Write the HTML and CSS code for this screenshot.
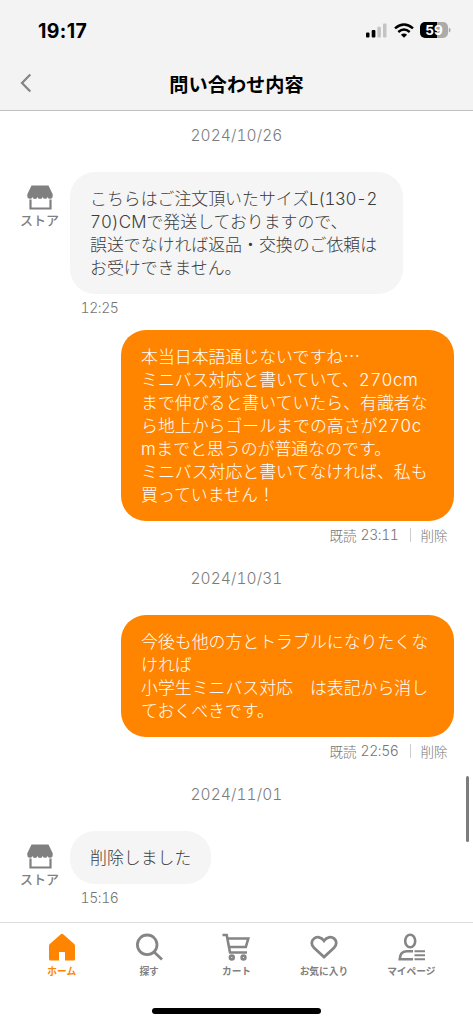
FILE: index.html
```html
<!DOCTYPE html>
<html lang="ja">
<head>
<meta charset="utf-8">
<meta name="viewport" content="width=device-width, initial-scale=1">
<title>問い合わせ内容</title>
<link rel="stylesheet" href="styles.css">
</head>
<body>
<svg width="0" height="0" class="defs" aria-hidden="true">
  <symbol id="store" viewBox="0 0 26 25">
    <path fill="#808080" d="M4.5 0.5h17l4.200 8.800v1.700a2.600 2.600 0 0 1-5.100 .9 2.600 2.600 0 0 1-5 0 2.600 2.600 0 0 1-5.100 0 2.600 2.600 0 0 1-5.100 0A2.600 2.600 0 0 1 .3 11V9.300z"/>
    <path fill="none" stroke="#808080" stroke-width="2.200" d="M3.500 14.500v9h20v-9"/>
  </symbol>
</svg>
<div class="screen">
  <header class="top">
    <div class="status">
      <span class="clock">19:17</span>
      <div class="indicators">
        <svg width="21" height="15" viewBox="0 0 21 15"><rect x="0" y="9.5" width="3.5" height="5" rx="1"/><rect x="5.7" y="7" width="3.7" height="7.5" rx="1"/><rect x="11.4" y="3.7" width="3.5" height="10.8" rx="1" fill="#c3c3c3"/><rect x="17" y="0.5" width="3.5" height="14" rx="1" fill="#c3c3c3"/></svg>
        <svg class="wifi" width="20" height="15" viewBox="0 0 20 15" fill="none" stroke="#000" stroke-width="2.5"><path d="M1 5.4Q10-2.3 19 5.4M4.3 9Q10 4.1 15.7 9"/><path fill="#000" stroke="none" d="M6.9 11.7Q10 9.3 13.1 11.7L10 14.8z"/></svg>
        <div class="battery"><span>59</span></div>
        <svg width="3" height="6" viewBox="0 0 3 6"><path fill="#ababab" d="M.8 .5Q3 1.5 2.6 3 3 4.5.8 5.5z"/></svg>
      </div>
    </div>
    <div class="nav">
      <svg class="back" width="12" height="20" viewBox="0 0 12 20"><path fill="none" stroke="#848484" stroke-width="2.2" d="M10.3 1.5 2 10l8.3 8.5"/></svg>
      <h1>問い合わせ内容</h1>
    </div>
  </header>

  <main class="chat">
    <div class="date">2024/10/26</div>
    <div class="row">
      <div class="shop"><svg width="26" height="25"><use href="#store"/></svg><span>ストア</span></div>
      <div class="bubble wide">こちらはご注文頂いたサイズ<span class="n tight">L(130-2</span><br><span class="n snug">70)CM</span>で発送しておりますので、<br>誤送でなければ返品・交換のご依頼は<br>お受けできません。</div>
    </div>
    <div class="meta in">12:25</div>
    <div class="row mine">
      <div class="bubble orange wide">本当日本語通じないですね⋯<br>ミニバス対応と書いていて、<span class="n">270cm</span><br>まで伸びると書いていたら、有識者な<br>ら地上からゴールまでの高さが<span class="n">270c</span><br><span class="n">m</span>までと思うのが普通なのです。<br>ミニバス対応と書いてなければ、私も<br>買っていません！</div>
    </div>
    <div class="meta out"><span>既読</span><span class="t">23:11</span><i></i><span>削除</span></div>
    <div class="date later">2024/10/31</div>
    <div class="row mine">
      <div class="bubble orange wide">今後も他の方とトラブルになりたくな<br>ければ<br>小学生ミニバス対応　は表記から消し<br>ておくべきです。</div>
    </div>
    <div class="meta out"><span>既読</span><span class="t">22:56</span><i></i><span>削除</span></div>
    <div class="date later">2024/11/01</div>
    <div class="row">
      <div class="shop"><svg width="26" height="25"><use href="#store"/></svg><span>ストア</span></div>
      <div class="bubble">削除しました</div>
    </div>
    <div class="meta in">15:16</div>
    <div class="scrollbar"></div>
  </main>

  <footer class="tabs">
    <nav>
      <a class="active"><svg width="28" height="28" viewBox="0 0 28 28"><path fill="#ff8500" d="M12.8 1.3q1.2-1 2.4 0L26.2 11q.8.7.8 1.8V26q0 1.5-1.5 1.5H17V19h-6v8.5H2.5Q1 27.500 1 26V12.800q0-1.100.8-1.800z"/></svg><span>ホーム</span></a>
      <a><svg width="28" height="28" viewBox="0 0 28 28"><circle cx="12.200" cy="11.800" r="9.800"/><path d="M18.800 18.800 27 26.500"/></svg><span>探す</span></a>
      <a><svg width="28" height="28" viewBox="0 0 28 28"><g stroke-width="2.600"><path d="M.5 2h4.200L8 19.500h17"/><path d="M5.700 5.500H26.300L23.800 14H7.300"/><circle cx="9.800" cy="24.500" r="1.900"/><circle cx="21.500" cy="24.500" r="1.900"/></g></svg><span>カート</span></a>
      <a><svg width="28" height="28" viewBox="0 0 28 28"><path d="M14 24 4.200 15C.8 11.800 1.200 7.900 3.800 5.700 6.800 3.200 11.200 3.800 14 7.800 16.800 3.800 21.200 3.200 24.200 5.700 26.800 7.900 27.200 11.800 23.800 15z"/></svg><span>お気に入り</span></a>
      <a><svg width="28" height="28" viewBox="0 0 28 28"><g stroke-width="2.600"><ellipse cx="13.200" cy="8" rx="5" ry="6.300"/><path d="M16 18.200H9.500Q3 18.500 2.700 26.200H16"/></g><path stroke-width="2" d="M17.500 18.300H28M17.500 22.300H28M17.500 26.300H28"/></svg><span>マイページ</span></a>
    </nav>
    <div class="home-bar"></div>
  </footer>
</div>
</body>
</html>
```
FILE: styles.css
```css
* { box-sizing: border-box; }
body { margin: 0; background: #fff; font-family: "Noto Sans CJK JP", sans-serif; }
.defs { position: absolute; }
.screen { height: 1024px; display: flex; flex-direction: column; overflow: hidden; }

.top { height: 111px; flex: none; background: #f3f3f3; border-bottom: 1px solid #c0c0c0; }
.status { height: 60px; display: flex; justify-content: space-between; padding: 0 22px 0 38px; align-items: center; }
.clock { font: 700 19.500px/24px Inter, sans-serif; letter-spacing: 0.400px; padding-top: 1px; }
.indicators { display: flex; align-items: center; }
.wifi { margin: 0 6px 0 7px; }
.battery { width: 28px; height: 16px; border-radius: 5px; background: linear-gradient(90deg, #000 60%, #ababab 60%); color: #fff; font: 700 13.500px/16px Inter, sans-serif; text-align: center; }
.nav { height: 50px; display: grid; grid-template-columns: 60px 1fr 60px; align-items: center; }
.back { margin: -4px 0 0 20px; }
.nav h1 { margin: -3px 0 0; text-align: center; font-size: 19.200px; line-height: 28px; font-weight: 700; white-space: nowrap; }

.chat { position: relative; flex: 1; min-height: 0; padding: 14px 19.500px 0; }
.date { height: 20px; margin-bottom: 27px; text-align: center; color: #7c7c7c; font: 300 15.500px/21px Inter, sans-serif; font-variant-numeric: tabular-nums; letter-spacing: 0.100px; }
.date.later { margin-top: 18.500px; }
.row { display: flex; align-items: flex-start; }
.row.mine { justify-content: flex-end; margin-top: 7.500px; }
.shop { width: 40px; height: 50px; margin-right: 10.500px; padding-top: 13px; display: flex; flex-direction: column; align-items: center; color: #808080; font-size: 13px; line-height: 18px; font-weight: 500; flex: none; }
.shop svg { flex: none; }
.shop span { margin-top: 1px; white-space: nowrap; }
.bubble { padding: 14.250px 20px 15.250px; border-radius: 25px; background: #f5f5f5; color: #3c3c3c; font-size: 16.900px; line-height: 23px; font-weight: 300; white-space: nowrap; }
.bubble.wide { width: 332.500px; }
.bubble.orange { background: #ff8500; color: #fff; }
.n { font-family: Inter, sans-serif; font-variant-numeric: tabular-nums; letter-spacing: 0.500px; line-height: 0; }
.n.tight { letter-spacing: -0.400px; }
.n.snug { letter-spacing: 0.100px; }
.meta { height: 29px; display: flex; align-items: center; color: #757575; font-size: 13.500px; font-weight: 300; line-height: 20px; }
.meta.in { padding-left: 61px; font-family: Inter, sans-serif; font-size: 14px; letter-spacing: -0.400px; font-variant-numeric: tabular-nums; }
.meta.out { justify-content: flex-end; padding: 0 6px 0.500px 0; }
.meta i { width: 1px; height: 14px; margin: 0 10px 0 11px; background: #ccc; }
.t { margin-left: 4px; font-family: Inter, sans-serif; font-size: 14px; letter-spacing: -0.400px; font-variant-numeric: tabular-nums; }
.scrollbar { position: absolute; right: 4px; top: 665px; width: 3px; height: 66px; border-radius: 2px; background: #7c7c7c; }

.tabs { height: 102px; flex: none; border-top: 1px solid #ddd; background: #fff; display: flex; flex-direction: column; align-items: center; }
.tabs nav { width: 437px; height: 85px; display: grid; grid-template-columns: repeat(5, 1fr); padding-top: 10px; }
.tabs a { display: flex; flex-direction: column; align-items: center; color: #808080; font-size: 9.700px; line-height: 14px; font-weight: 700; white-space: nowrap; }
.tabs a > svg { fill: none; stroke: #858585; stroke-width: 2.800; }
.tabs a.active > svg { stroke: none; }
.tabs a span { margin-top: 3px; }
.tabs a.active { color: #ff8500; }
.home-bar { width: 169px; height: 6px; border-radius: 3px; background: #000; }
```
